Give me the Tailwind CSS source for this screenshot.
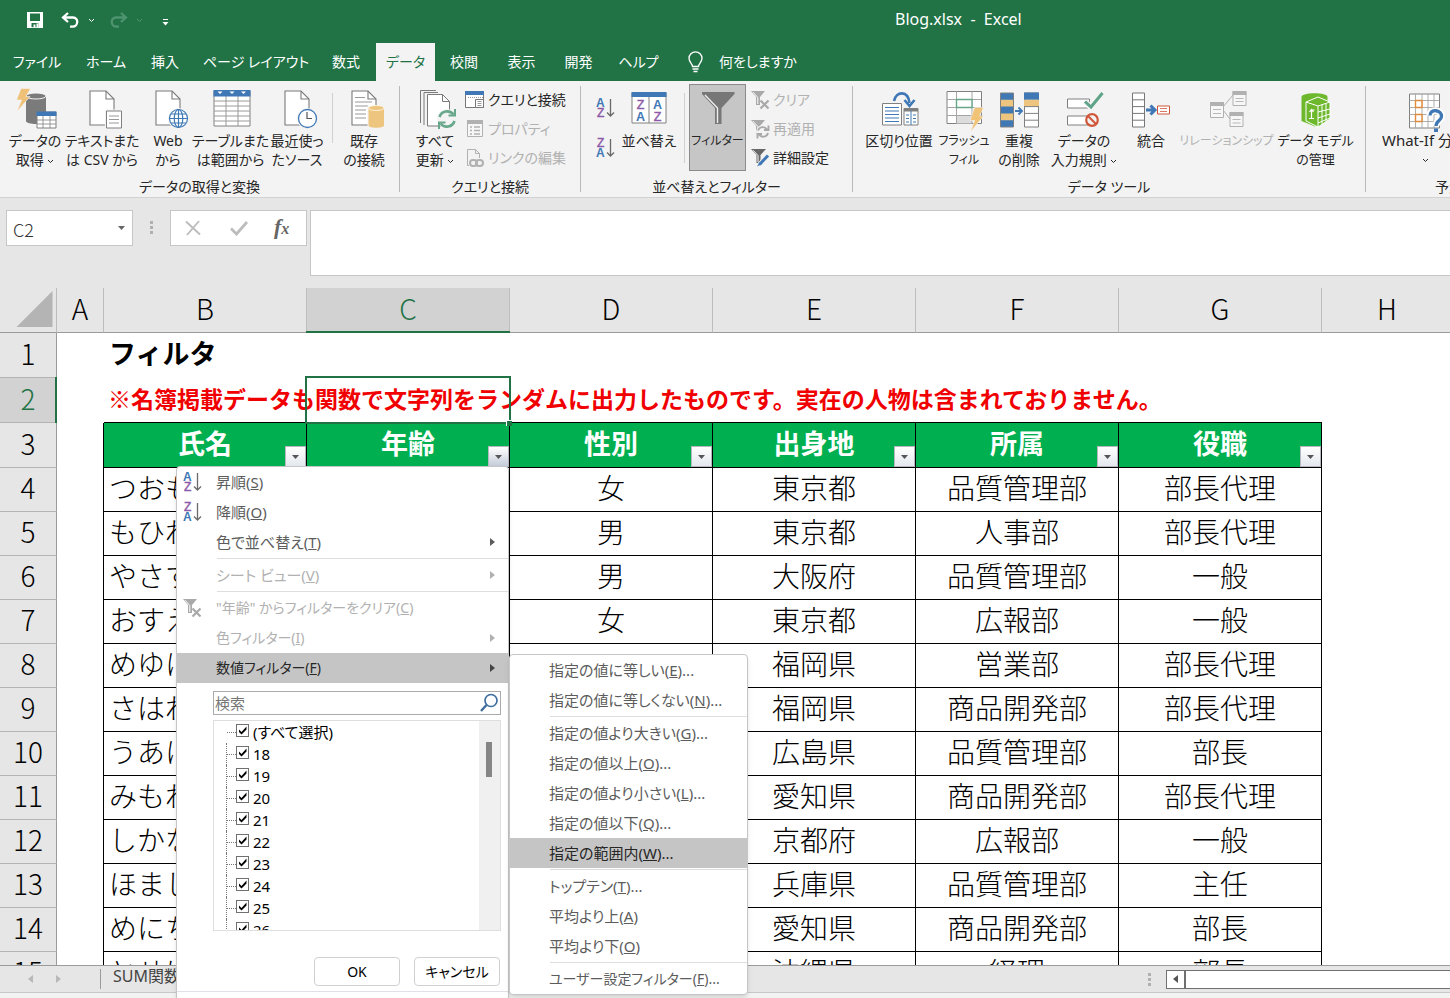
<!DOCTYPE html>
<html lang="ja">
<head>
<meta charset="utf-8">
<title>Blog.xlsx - Excel</title>
<script src="https://cdn.jsdelivr.net/npm/@tailwindcss/browser@4"></script>
</head>
<body class="relative flex h-screen flex-col overflow-hidden bg-[#e6e6e6] font-['Noto_Sans','Noto_Sans_CJK_JP',sans-serif] text-[15px] leading-[19px] text-[#262626]">

<svg class="hidden">
  <symbol id="chev" viewBox="0 0 7 5"><path d="M1 1l2.5 2.5L6 1" fill="none" stroke="currentColor"/></symbol>
  <symbol id="page" viewBox="0 0 40 40"><path d="M8 3h16l8 8v26H8z" fill="#fff" stroke="#7a7a7a" stroke-width="1.1"/><path d="M24 3v8h8" fill="none" stroke="#7a7a7a" stroke-width="1.1"/></symbol>
  <symbol id="down" viewBox="0 0 7 4"><path d="M0 0h7L3.5 4z" fill="currentColor"/></symbol>
  <symbol id="tick" viewBox="0 0 13 13"><path d="M3 5.5l2.500 2.500L10.500 2.500v3L5.500 10.500 3 8z" fill="#000"/></symbol>
  <symbol id="az" viewBox="0 0 20 22"><g font-family="Liberation Sans" font-weight="bold" font-size="12"><text x="0" y="9.500" fill="#3f78b5">A</text><text x="1" y="20" fill="#8d5aa8" font-weight="normal" stroke="#8d5aa8" stroke-width=".4">Z</text></g><path d="M14.500 2v17M11 15.500l3.500 3.500 3.500-3.500" fill="none" stroke="#6a6a6a" stroke-width="1.300"/></symbol>
  <symbol id="za" viewBox="0 0 20 22"><g font-family="Liberation Sans" font-weight="bold" font-size="12"><text x="0" y="20" fill="#3f78b5">A</text><text x="1" y="9.500" fill="#8d5aa8" font-weight="normal" stroke="#8d5aa8" stroke-width=".4">Z</text></g><path d="M14.500 2v17M11 15.500l3.500 3.500 3.500-3.500" fill="none" stroke="#6a6a6a" stroke-width="1.300"/></symbol>
  <symbol id="clr" viewBox="0 0 20 20"><path d="M1 1h14l-5 6v8H6V7z" fill="#a9a9a9"/><path d="M3 2.200l4.800 5.300V14" fill="none" stroke="#fff"/><path d="M10.500 10.500l8 8M18.500 10.500l-8 8" stroke="#a9a9a9" stroke-width="2.200"/></symbol>
  <symbol id="right" viewBox="0 0 5 8"><path d="M0 0v8l5-4z" fill="currentColor"/></symbol>
</svg>

<!-- Title bar -->
<header class="shrink-0 bg-[#217346] text-white">
  <div class="relative flex h-[43px] items-center pb-[3px] pl-[27px]">
    <button aria-label="上書き保存" class="w-4"><svg class="size-4" viewBox="0 0 16 16"><path d="M.8.800h14.400v14.400H.8z" fill="none" stroke="#fff" stroke-width="1.600"/><path d="M1 1h2v8h10V1h2v14H1z" fill="#fff"/><path d="M4.500 11h7v4.200h-7z" fill="#217346"/><path d="M6.500 12.500h2v3H6.500zM9.500 11.500h2v4h-2z" fill="#fff"/></svg></button>
    <button aria-label="元に戻す" class="ml-[18px] w-[19px]"><svg class="h-4 w-[19px]" viewBox="0 0 19 16"><path d="M7 1L2 5.500 7 10M2.500 5.500H12c6 0 5.500 9-.5 9.200H9" fill="none" stroke="#fff" stroke-width="2.300"/></svg></button>
    <svg class="ml-2 h-[5px] w-[7px]"><use href="#chev"/></svg>
    <button aria-label="やり直し" class="ml-[14px] w-[19px] text-[#4f9470]"><svg class="h-4 w-[19px]" viewBox="0 0 19 16"><path d="M12 1l5 4.500-5 4.500M16.500 5.500H7C1 5.500 1.500 14.500 7.500 14.700H10" fill="none" stroke="currentColor" stroke-width="2.300"/></svg></button>
    <svg class="ml-2 h-[5px] w-[7px] text-[#4f9470]"><use href="#chev"/></svg>
    <svg class="ml-[19px] mt-1 h-[7px] w-[7px]" viewBox="0 0 7 7"><path d="M1 .5h5" stroke="#fff"/><path d="M.5 3h6l-3 3.500z" fill="#fff"/></svg>
    <h1 class="absolute left-[895px] top-[9px] whitespace-pre text-base leading-5">Blog.xlsx  -  Excel</h1>
  </div>
  <nav class="flex h-[38px] items-center whitespace-nowrap text-center text-sm [font-feature-settings:'palt']">
    <a href="#" class="w-[74px]">ファイル</a>
    <a href="#" class="w-16">ホーム</a>
    <a href="#" class="w-[54px]">挿入</a>
    <a href="#" class="w-32">ページ レイアウト</a>
    <a href="#" class="w-14 pr-1">数式</a>
    <a href="#" class="flex h-full w-[59px] items-center justify-center bg-[#f3f3f3] text-[#217346]">データ</a>
    <a href="#" class="w-[58px]">校閲</a>
    <a href="#" class="w-[57px]">表示</a>
    <a href="#" class="w-[57px]">開発</a>
    <a href="#" class="w-[63px]">ヘルプ</a>
    <a href="#" class="flex items-center gap-4 pl-[18px]">
      <svg class="h-[22px] w-[15px]" viewBox="0 0 15 22"><path d="M4.500 15.500c0-3-3.500-4-3.500-8.200a6.500 6.500 0 0 1 13 0c0 4.200-3.500 5.200-3.500 8.200zM4.500 18h6M5.500 20.500h4" fill="none" stroke="#fff" stroke-width="1.300"/></svg>何をしますか</a>
  </nav>
</header>

<!-- Ribbon -->
<div class="flex h-[117px] shrink-0 overflow-hidden whitespace-nowrap border-b border-[#d2d2d2] bg-[#f3f3f3] text-center [font-feature-settings:'palt'] [&_button]:shrink-0 [&_svg]:overflow-visible">
  <section class="flex w-[399px] shrink-0 flex-col">
    <div class="flex h-24 pl-[6px] text-sm leading-[19px]">
      <button class="flex w-[58px] flex-col items-center pt-[7px]">
        <svg class="mb-[3px] size-10" viewBox="0 0 40 40"><path d="M11 8v25c0 4 20 4 20 0V8z" fill="#7b7b7b"/><ellipse cx="21" cy="8" rx="10" ry="3" fill="#7b7b7b" stroke="#f3f3f3"/><path d="M6 .5h9.500L11 8.500h4L2 23.500 6.500 12H1.500z" fill="#efc078" stroke="#f3f3f3" stroke-width=".6"/><path d="M22 24h19v16H22z" fill="#fff" stroke="#808080"/><path d="M21.500 23.500h20v4.500h-20z" fill="#3f78b5"/><path d="M22 32h19M22 36h19M28 28v12M35 28v12" stroke="#808080" stroke-width=".8"/></svg>
        <span>データの<br>取得 <svg class="inline h-[5px] w-[7px]"><use href="#chev"/></svg></span></button>
      <button class="flex w-[76px] flex-col items-center pt-[7px]">
        <svg class="mb-[3px] size-10" viewBox="0 0 40 40"><use href="#page"/><path d="M23 21.500h18v19H23z" fill="#f3f3f3"/><path d="M24.500 23h15v17h-15z" fill="#fff" stroke="#808080"/><path d="M27 28h10M27 31.500h10M27 35h10" stroke="#999"/></svg>
        <span>テキストまた<br>は CSV から</span></button>
      <button class="flex w-14 flex-col items-center pt-[7px]">
        <svg class="mb-[3px] size-10" viewBox="0 0 40 40"><use href="#page"/><circle cx="30.500" cy="30.500" r="10.500" fill="#f3f3f3"/><g fill="none" stroke="#3f78b5" stroke-width="1.200"><circle cx="30.500" cy="30.500" r="9" fill="#fff"/><ellipse cx="30.500" cy="30.500" rx="4.300" ry="9"/><path d="M30.500 21.500v18M21.500 30.500h18M23 26h15M23 35h15"/></g></svg>
        <span>Web<br>から</span></button>
      <button class="flex w-[69px] flex-col items-center pt-[7px]">
        <svg class="mb-[3px] size-10" viewBox="0 0 40 40"><path d="M3 3h36v35H3z" fill="#fff" stroke="#808080"/><path d="M3 13h36M3 18h36M3 23h36M3 28h36M3 33h36M15 8v30M27 8v30" stroke="#9a9a9a"/><path d="M2.500 2h37v6.500h-37z" fill="#3f78b5"/><path d="M6.500 3.500h5L9 6zM18.500 3.500h5L21 6zM30 3.500h5L32.500 6z" fill="#fff"/></svg>
        <span>テーブルまた<br>は範囲から</span></button>
      <button class="flex w-16 flex-col items-center pt-[7px]">
        <svg class="mb-[3px] size-10" viewBox="0 0 40 40"><use href="#page"/><circle cx="30.500" cy="30.500" r="10.500" fill="#f3f3f3"/><circle cx="30.500" cy="30.500" r="9" fill="#fff" stroke="#3f78b5" stroke-width="1.300"/><path d="M30 24v6.500h5" fill="none" stroke="#555" stroke-width="1.200"/></svg>
        <span>最近使っ<br>たソース</span></button>
      <div class="ml-[3px] mt-3 h-[50px] w-px bg-[#d0d0d0]"></div>
      <button class="ml-[3px] flex w-14 flex-col items-center pt-[7px]">
        <svg class="mb-[3px] size-10" viewBox="0 0 40 40"><use href="#page"/><path d="M11 9.500h10M11 14h17M11 18h13M11 22h11M11 26h11M11 30h11" stroke="#999"/><path d="M23.500 18h17.500v22H23.500z" fill="#f3f3f3"/><path d="M24.500 20v17.500c0 3 15.500 3 15.500 0V20z" fill="#edc57e"/><ellipse cx="32.200" cy="20" rx="7.700" ry="2.500" fill="#edc57e" stroke="#fff3dc"/></svg>
        <span>既存<br>の接続</span></button>
    </div>
    <div class="text-sm leading-[19px]">データの取得と変換</div>
  </section>
  <div class="my-[5px] w-px shrink-0 bg-[#b9b9b9]"></div>

  <section class="flex w-[180px] shrink-0 flex-col">
    <div class="flex h-24 pl-[9px] text-sm leading-[19px]">
      <button class="flex w-[52px] flex-col items-center pt-[7px]">
        <svg class="mb-[3px] size-10" viewBox="0 0 40 40"><path d="M5.500 35V2.500H21M9 37V4.500h14" fill="none" stroke="#7a7a7a"/><path d="M12.500 6.500h15l7 7V38h-22z" fill="#fff" stroke="#7a7a7a"/><path d="M27.500 6.500v7h7" fill="none" stroke="#7a7a7a"/><circle cx="32" cy="31" r="10" fill="#f3f3f3"/><g fill="none" stroke="#67a88b" stroke-width="2.600"><path d="M24.500 29a8 8 0 0 1 14-2.500M39.500 33a8 8 0 0 1-14 2.500"/><path d="M40 21v6.500h-6.500M24 41v-6.500h6.500" stroke-width="2"/></g></svg>
        <span>すべて<br>更新 <svg class="inline h-[5px] w-[7px]"><use href="#chev"/></svg></span></button>
      <div class="ml-1 mt-1 flex flex-col text-left">
        <button class="flex h-[29px] items-center gap-[3px]"><svg class="size-5" viewBox="0 0 20 20"><path d="M.5 1.500h18v16H.5z" fill="#fff" stroke="#777"/><path d="M0 1h19v4H0z" fill="#3f78b5"/><path d="M3 7.500h15" stroke="#999" stroke-dasharray="1 1"/><path d="M10.500 9.500h8v8h-8z" fill="#fff" stroke="#777"/><path d="M12.500 11.500h4M12.500 13.500h4M12.500 15.500h4" stroke="#999"/></svg>クエリと接続</button>
        <button disabled class="flex h-[29px] items-center gap-[3px] text-[#b1b1b1]"><svg class="size-5" viewBox="0 0 20 20"><path d="M2.500 1.500h15v16h-15z" fill="#f7f7f7" stroke="#b1b1b1"/><path d="M2 1h16v4H2z" fill="#b1b1b1"/><path d="M5 8h2M5 11.500h2M5 15h2M9 8h6M9 11.500h6M9 15h6" stroke="#b1b1b1" stroke-width="1.300"/></svg>プロパティ</button>
        <button disabled class="flex h-[29px] items-center gap-[3px] text-[#b1b1b1]"><svg class="size-5" viewBox="0 0 20 20"><path d="M4 17.500H2.500V1.500h8l4 4V10M10.500 1.500v4h4" fill="none" stroke="#b1b1b1"/><g fill="none" stroke="#b1b1b1" stroke-width="2"><rect x="5" y="12" width="7" height="6" rx="3"/><rect x="11" y="12" width="7" height="6" rx="3"/></g></svg>リンクの編集</button>
      </div>
    </div>
    <div class="text-sm leading-[19px]">クエリと接続</div>
  </section>
  <div class="my-[5px] w-px shrink-0 bg-[#b9b9b9]"></div>

  <section class="flex w-[271px] shrink-0 flex-col">
    <div class="flex h-24 pl-[15px] text-sm leading-[19px]">
      <div class="flex flex-col gap-[18px] pt-4">
        <button aria-label="昇順" class="w-5"><svg class="h-[22px] w-5"><use href="#az"/></svg></button>
        <button aria-label="降順" class="w-5"><svg class="h-[22px] w-5"><use href="#za"/></svg></button>
      </div>
      <button class="ml-1 flex w-[58px] flex-col items-center pt-[7px]">
        <svg class="mb-[3px] size-10" viewBox="0 0 40 40"><path d="M3 5h34v30H3z" fill="#fff" stroke="#808080"/><path d="M2.500 4h35v5h-35z" fill="#3f78b5"/><path d="M20 9v26" stroke="#808080"/><g font-family="Liberation Sans" font-size="12.500" font-weight="bold" text-anchor="middle"><text x="11.500" y="20.500" fill="#8d5aa8" font-weight="normal" stroke="#8d5aa8" stroke-width=".4">Z</text><text x="11.500" y="32.500" fill="#3f78b5">A</text><text x="28.500" y="20.500" fill="#3f78b5">A</text><text x="28.500" y="32.500" fill="#8d5aa8" font-weight="normal" stroke="#8d5aa8" stroke-width=".4">Z</text></g></svg>
        <span>並べ替え</span></button>
      <div class="ml-[6px] mt-3 h-[70px] w-px bg-[#d0d0d0]"></div>
      <button class="mb-[6px] ml-1 mt-[3px] flex w-[57px] flex-col items-center border border-[#8b8b8b] bg-[#c6c6c6] pt-[3px] text-xs leading-[19px]">
        <svg class="mb-[3px] size-10" viewBox="0 0 40 40"><path d="M4 4h32.500v2L23.500 20v16h-6.500V20L4 6z" fill="#777"/><path d="M7 7l12.500 13v15" fill="none" stroke="#eee" stroke-width="1.400"/></svg>
        <span>フィルター</span></button>
      <div class="ml-1 mt-1 flex flex-col text-left">
        <button disabled class="flex h-[29px] items-center gap-[3px] text-[#b1b1b1]"><svg class="size-5"><use href="#clr"/></svg>クリア</button>
        <button disabled class="flex h-[29px] items-center gap-[3px] text-[#b1b1b1]"><svg class="size-5" viewBox="0 0 20 20"><path d="M1 1h14l-5 6v8H6V7z" fill="#a9a9a9"/><path d="M3 2.200l4.800 5.300V14" fill="none" stroke="#fff"/><circle cx="13" cy="13" r="7" fill="#f3f3f3"/><path d="M8 11.500a5 5 0 0 1 9-1M18 14a5 5 0 0 1-9 1.500M18.500 6.500v4.500h-4.500M7.500 19.500V15H12" fill="none" stroke="#a9a9a9" stroke-width="1.900"/></svg>再適用</button>
        <button class="flex h-[29px] items-center gap-[3px]"><svg class="size-5" viewBox="0 0 20 20"><path d="M1 1h15l-5.500 6v8h-4V7z" fill="#666"/><path d="M3 2.200l5 5.300V14" fill="none" stroke="#fff"/><path d="M18.500 6.500L9 17.500" stroke="#f3f3f3" stroke-width="5"/><path d="M18 7.500L9.500 16.500" stroke="#3f78b5" stroke-width="3"/><path d="M9.500 14.500l2 2-4.500 2z" fill="#3f78b5"/></svg>詳細設定</button>
      </div>
    </div>
    <div class="text-sm leading-[19px]">並べ替えとフィルター</div>
  </section>
  <div class="my-[5px] w-px shrink-0 bg-[#b9b9b9]"></div>

  <section class="flex w-[512px] shrink-0 flex-col">
    <div class="flex h-24 pl-[10px] text-sm leading-[19px]">
      <button class="flex w-[72px] flex-col items-center pt-[7px]">
        <svg class="mb-[3px] size-10" viewBox="0 0 40 40"><path d="M3.500 15.500h19V37h-19z" fill="#fff" stroke="#808080"/><path d="M6 19.500h14M6 23h14M6 26.500h14M6 30h14M6 33.500h14" stroke="#3f78b5" stroke-width="1.200"/><path d="M25 20.500h14V37H25z" fill="#fff" stroke="#808080"/><path d="M25 20.500h14v3H25z" fill="#808080"/><path d="M32 23v14M27 27h3M34 27h3M27 30.500h3M34 30.500h3M27 34h3M34 34h3" stroke="#3f78b5"/><path d="M15 13C17 3 29 2 30.500 15" fill="none" stroke="#3f78b5" stroke-width="2.600"/><path d="M25.500 12l5 6 5-6" fill="none" stroke="#3f78b5" stroke-width="2.600"/></svg>
        <span>区切り位置</span></button>
      <button class="flex w-[58px] flex-col items-center pt-[7px] text-xs leading-[19px]">
        <svg class="mb-[3px] size-10" viewBox="0 0 40 40"><path d="M3 3.500h34.500v32H3z" fill="#fff" stroke="#808080"/><path d="M12.500 27.500H28v8H12.500z" fill="#dcdcdc"/><path d="M3 11.500h34M3 19.500h34M3 27.500h34M12.500 3.500v32M28 3.500v32" stroke="#a5a5a5"/><path d="M12.500 11.500H28v8H12.500z" fill="#fff" stroke="#67a88b" stroke-width="1.400"/><path d="M30.500 19.500h9L35.500 28h4L26.500 44l4-11.500h-4.500z" fill="#f0c376" stroke="#f3f3f3" stroke-width=".6"/></svg>
        <span>フラッシュ<br>フィル</span></button>
      <button class="flex w-[52px] flex-col items-center pt-[7px]">
        <svg class="mb-[3px] size-10" viewBox="0 0 40 40"><path d="M1 5h14v34H1z" fill="#3f78b5"/><path d="M1 11.800h14v6.800H1zM1 25.400h14v6.800H1z" fill="#edc57e"/><path d="M25.500 5h14v34h-14z" fill="#fff" stroke="#808080"/><path d="M25 4.500h15v7.300H25z" fill="#3f78b5"/><path d="M25 11.800h15v6.800H25z" fill="#edc57e"/><path d="M25 18.600h15M25 25.400h15M25 32.200h15M1.500 5v34h13V5z" fill="none" stroke="#808080"/><path d="M16 23h7M19.500 19.500L23 23l-3.500 3.500" fill="none" stroke="#3f78b5" stroke-width="1.800"/></svg>
        <span>重複<br>の削除</span></button>
      <button class="flex w-[78px] flex-col items-center pt-[7px]">
        <svg class="mb-[3px] size-10" viewBox="0 0 40 40"><path d="M3.500 11h22v9h-22zM3.500 28h22v9h-22z" fill="#fff" stroke="#808080"/><path d="M21 13.500l6 6L38.500 5" fill="none" stroke="#f3f3f3" stroke-width="6"/><path d="M21 13.500l6 5.500L38.500 5" fill="none" stroke="#5fa388" stroke-width="3"/><circle cx="28" cy="32" r="5.800" fill="#f3f3f3" stroke="#d0583a" stroke-width="2.200"/><path d="M24 28l8 8" stroke="#d0583a" stroke-width="2.200"/></svg>
        <span>データの<br>入力規則 <svg class="inline h-[5px] w-[7px]"><use href="#chev"/></svg></span></button>
      <button class="flex w-14 flex-col items-center pt-[7px]">
        <svg class="mb-[3px] size-10" viewBox="0 0 40 40"><path d="M1.500 5h12v34h-12zM1.500 11.800h12M1.500 18.600h12M1.500 25.400h12M1.500 32.200h12" fill="#fff" stroke="#777"/><path d="M15 22h8M19.500 17.500L24 22l-4.500 4.500" fill="none" stroke="#3f78b5" stroke-width="3"/><path d="M26.500 18h12v8h-12z" fill="#fff" stroke="#d0583a"/><path d="M29 20.500h7M29 23.500h7" stroke="#d0583a" stroke-width=".8"/></svg>
        <span>統合</span></button>
      <button disabled class="flex w-[95px] flex-col items-center pt-[7px] text-xs leading-[19px] text-[#b1b1b1]">
        <svg class="mb-[3px] size-10" viewBox="0 0 40 40"><path d="M16 19L26 7M16 22l7 9" stroke="#b1b1b1"/><g fill="#f7f7f7" stroke="#b1b1b1"><path d="M3.500 14.500h13v15h-13zM26 3.500h13v14H26zM23 24.500h13v14H23z"/><path d="M6 21.500h8M6 25.500h8M28.500 10.500h8M28.500 13.500h8M25.500 31.500h8M25.500 35h8" stroke-width=".9"/></g><path d="M3 14h14v4H3zM25.500 3h14v4h-14zM22.500 24h14v4h-14z" fill="#b1b1b1"/></svg>
        <span>リレーションシップ</span></button>
      <button class="flex w-[83px] flex-col items-center pt-[7px] text-[13px] leading-[19px]">
        <svg class="mb-[3px] size-10" viewBox="0 0 40 40"><path d="M5.500 9c0-5 26-5 26 0v22L19 38.500 5.500 33z" fill="#6db82d"/><path d="M10 14l12-5 12 5v17l-12 8-12-6z" fill="#6db82d" stroke="#fff"/><path d="M10 14l12 4 12-4M22 18v21" fill="none" stroke="#fff"/><path d="M26 17v19M30 15.500v18M22 24l12-3M22 30l12-4M22 35l12-5" stroke="#fff"/><path d="M18.500 22h-3v8M13.500 24l2-2.500 2 2.500M13 30.500h5" fill="none" stroke="#fff" stroke-width="1.200"/></svg>
        <span>データ モデル<br>の管理</span></button>
    </div>
    <div class="text-sm leading-[19px]">データ ツール</div>
  </section>
  <div class="my-[5px] w-px shrink-0 bg-[#b9b9b9]"></div>

  <section class="flex w-[166px] shrink-0 flex-col">
    <div class="flex h-24 pl-[8px] leading-[19px]">
      <button class="flex w-[102px] flex-col items-center pt-[7px]">
        <svg class="mb-[3px] size-10" viewBox="0 0 40 40"><path d="M4.500 6h30v34h-30z" fill="#fff" stroke="#808080"/><path d="M4.500 12.500h30M4.500 19.500h30M4.500 26.500h30M4.500 33.500h30M10.500 6v34M17 6v34M23 6v34M29 6v34" stroke="#a5a5a5" stroke-width=".9"/><path d="M10.500 12.500H17v7h-6.500zM10.500 26.500H17v7h-6.500z" fill="#fff" stroke="#e08a3a" stroke-width="1.400"/><path d="M25 27.500c0-7 12-6 11.500 1 0 4-5.500 4-5.500 9.500" fill="none" stroke="#fff" stroke-width="7"/><path d="M25 27.500c0-7 12-6 11.500 1 0 4-5.500 4-5.500 9.500" fill="none" stroke="#3f78b5" stroke-width="3.300"/><path d="M29 40.500h4v3.500h-4z" fill="#3f78b5"/></svg>
        <span>What-If 分析<br><svg class="inline h-[5px] w-[7px]"><use href="#chev"/></svg></span></button>
    </div>
    <div class="text-sm leading-[19px]">予測</div>
  </section>
</div>

<!-- Formula bar -->
<div class="flex h-[90px] shrink-0 items-start pl-[6px] pt-3">
  <div class="relative flex h-9 w-[127px] items-center border border-[#c6c6c6] bg-white">
    <input aria-label="名前ボックス" value="C2" class="h-full w-full bg-transparent pl-[6px] pt-px font-['Noto_Sans_CJK_JP'] text-lg font-light text-[#333] outline-none">
    <svg class="mr-[7px] h-1 w-[7px] shrink-0 text-[#666]"><use href="#down"/></svg>
  </div>
  <div class="ml-[17px] mt-[11px] flex flex-col gap-[2px]"><i class="size-[3px] bg-[#b0b0b0]"></i><i class="size-[3px] bg-[#b0b0b0]"></i><i class="size-[3px] bg-[#b0b0b0]"></i></div>
  <div class="ml-[17px] flex h-9 w-[137px] items-center border border-[#c6c6c6] bg-white pl-[14px]">
    <button aria-label="キャンセル"><svg class="size-4" viewBox="0 0 16 16"><path d="M1 1.500l14 13M14 1L2 15" stroke="#bcbcbc" stroke-width="1.900"/></svg></button>
    <button aria-label="入力" class="ml-[29px]"><svg class="h-4 w-[18px]" viewBox="0 0 18 16"><path d="M1 8.500l5.500 5.500L17 2" fill="none" stroke="#bcbcbc" stroke-width="2.800"/></svg></button>
    <button aria-label="関数の挿入" class="ml-[26px] font-['Liberation_Serif'] text-[22px] font-bold italic leading-6 text-[#666]">f<span class="text-base">x</span></button>
  </div>
  <textarea aria-label="数式バー" class="ml-[3px] h-[66px] flex-1 resize-none border border-r-0 border-[#c6c6c6] bg-white outline-none"></textarea>
</div>

<!-- Worksheet -->
<main class="relative min-h-0 flex-1 overflow-hidden bg-white font-['Noto_Sans_CJK_JP',sans-serif]">
  <table class="w-[1453px] table-fixed border-separate border-spacing-0 text-center text-[28px] font-light leading-9 text-black [&_tbody_th]:border-b [&_tbody_th]:border-r [&_tbody_th]:border-[#b4b4b4] [&_tbody_th]:border-r-[#9b9b9b] [&_tbody_th]:bg-[#e6e6e6] [&_tbody_th]:font-light [&_td]:p-0 [&_td]:pb-[5px] [&_th]:p-0 [&_th]:pb-[5px]">
    <colgroup><col class="w-[57px]"><col class="w-[47px]"><col class="w-[203px]"><col class="w-[203px]"><col class="w-[203px]"><col class="w-[203px]"><col class="w-[203px]"><col class="w-[203px]"><col></colgroup>
    <thead>
      <tr class="h-[45px] bg-[#e6e6e6] [&_th]:border-b [&_th]:border-r [&_th]:border-[#9b9b9b] [&_th]:border-r-[#bdbdbd] [&_th]:font-light">
        <th aria-label="すべて選択"><svg class="ml-4 mt-[3px] h-9 w-[37px]" viewBox="0 0 37 37"><path d="M37 0v37H0z" fill="#b4b4b4"/></svg></th>
        <th>A</th><th>B</th><th class="bg-[#d2d2d2] text-[#217346]">C</th><th>D</th><th>E</th><th>F</th><th>G</th><th>H</th>
      </tr>
    </thead>
    <tbody>
      <tr class="h-[45px]"><th>1</th><td></td><td class="text-left text-[27px] font-bold"><div class="w-0 whitespace-nowrap pl-[5px]">フィルタ</div></td><td></td><td></td><td></td><td></td><td></td><td></td></tr>
      <tr class="h-[45px] [&_td]:border-black"><th class="bg-[#d2d2d2]! text-[#217346]">2</th><td></td><td class="border-b text-left text-[23px] font-bold text-[#f00000]"><div class="w-0 whitespace-nowrap pl-1">※名簿掲載データも関数で文字列をランダムに出力したものです。実在の人物は含まれておりません。</div></td><td class="border-b"></td><td class="border-b"></td><td class="border-b"></td><td class="border-b"></td><td class="border-b"></td><td></td></tr>
      <tr class="h-[45px] text-[27px] font-bold text-white [&_button]:absolute [&_button]:bottom-0 [&_button]:right-0 [&_button]:flex [&_button]:size-[21px] [&_button]:items-center [&_button]:justify-center [&_button]:border [&_button]:border-[#b5b9bf] [&_button]:bg-linear-to-b [&_button]:from-white [&_button]:to-[#e4e8ee] [&_button]:text-[#555] [&_svg]:h-1 [&_svg]:w-[7px] [&_td]:relative [&_td]:border-b [&_td]:border-r [&_td]:border-black [&_td]:bg-[#00b050]">
        <th class="text-[28px] text-black">3</th><td class="border-b-0! bg-white!"></td>
        <td>氏名<button aria-label="氏名フィルター"><svg><use href="#down"/></svg></button></td>
        <td>年齢<button aria-label="年齢フィルター" class="to-[#c4ccd8]!"><svg><use href="#down"/></svg></button></td>
        <td>性別<button aria-label="性別フィルター"><svg><use href="#down"/></svg></button></td>
        <td>出身地<button aria-label="出身地フィルター"><svg><use href="#down"/></svg></button></td>
        <td>所属<button aria-label="所属フィルター"><svg><use href="#down"/></svg></button></td>
        <td>役職<button aria-label="役職フィルター"><svg><use href="#down"/></svg></button></td>
        <td class="border-0! bg-white!"></td></tr>
    </tbody>
    <tbody class="[&_td]:border-b [&_td]:border-r [&_td]:border-black [&_td:nth-child(2)]:border-b-0 [&_td:nth-child(3)]:pl-[5px] [&_td:nth-child(3)]:text-left [&_td:nth-child(9)]:border-0 [&_tr]:h-11">
      <tr><th>4</th><td></td><td>つおも</td><td></td><td>女</td><td>東京都</td><td>品質管理部</td><td>部長代理</td><td></td></tr>
      <tr><th>5</th><td></td><td>もひれ</td><td></td><td>男</td><td>東京都</td><td>人事部</td><td>部長代理</td><td></td></tr>
      <tr><th>6</th><td></td><td>やさす</td><td></td><td>男</td><td>大阪府</td><td>品質管理部</td><td>一般</td><td></td></tr>
      <tr><th>7</th><td></td><td>おすえ</td><td></td><td>女</td><td>東京都</td><td>広報部</td><td>一般</td><td></td></tr>
      <tr><th>8</th><td></td><td>めゆに</td><td></td><td></td><td>福岡県</td><td>営業部</td><td>部長代理</td><td></td></tr>
      <tr><th>9</th><td></td><td>さはれ</td><td></td><td></td><td>福岡県</td><td>商品開発部</td><td>部長代理</td><td></td></tr>
      <tr><th>10</th><td></td><td>うあに</td><td></td><td></td><td>広島県</td><td>品質管理部</td><td>部長</td><td></td></tr>
      <tr><th>11</th><td></td><td>みもれ</td><td></td><td></td><td>愛知県</td><td>商品開発部</td><td>部長代理</td><td></td></tr>
      <tr><th>12</th><td></td><td>しかな</td><td></td><td></td><td>京都府</td><td>広報部</td><td>一般</td><td></td></tr>
      <tr><th>13</th><td></td><td>ほまし</td><td></td><td></td><td>兵庫県</td><td>品質管理部</td><td>主任</td><td></td></tr>
      <tr><th>14</th><td></td><td>めにち</td><td></td><td></td><td>愛知県</td><td>商品開発部</td><td>部長</td><td></td></tr>
      <tr><th>15</th><td></td><td>とせけ</td><td></td><td></td><td>沖縄県</td><td>経理</td><td>部長</td><td></td></tr>
    </tbody>
  </table>
  <!-- Selection: header underline, row marker, cell outline and fill handle -->
  <div class="absolute left-[306px] top-[43px] h-[2px] w-[204px] bg-[#217346]"></div>
  <div class="absolute left-[55px] top-[89px] h-[46px] w-[2px] bg-[#217346]"></div>
  <div class="absolute left-[305px] top-[88px] h-[48px] w-[206px] border-2 border-[#217346]"></div>
  <div class="absolute left-[506px] top-[132px] size-[6px] border-l border-t border-white bg-[#217346]"></div>
</main>

<!-- Sheet tabs and scroll bar -->
<footer class="shrink-0 text-[#444]">
  <div class="flex h-7 items-center border-y border-t-[#9b9b9b] border-b-[#c8c8c8] bg-[#e6e6e6]">
    <button aria-label="前のシート" class="ml-7"><svg class="h-2 w-[5px] rotate-180 text-[#b8b8b8]"><use href="#right"/></svg></button>
    <button aria-label="次のシート" class="ml-[23px]"><svg class="h-2 w-[5px] text-[#b8b8b8]"><use href="#right"/></svg></button>
    <div class="ml-[39px] h-5 w-px bg-[#9b9b9b]"></div>
    <a href="#" class="mb-[6px] ml-3 text-base">SUM関数</a>
    <div class="ml-auto flex flex-col gap-[2px]"><i class="size-[3px] bg-[#b0b0b0]"></i><i class="size-[3px] bg-[#b0b0b0]"></i><i class="size-[3px] bg-[#b0b0b0]"></i></div>
    <div class="ml-[15px] flex h-[19px] w-[284px] items-center border border-r-0 border-[#707070] bg-white"><button aria-label="左へスクロール" class="flex h-full w-[19px] items-center justify-center border-r-2 border-[#707070]"><svg class="h-2 w-[5px] rotate-180 text-[#555]"><use href="#right"/></svg></button></div>
  </div>
  <div class="h-[5px] bg-[#f3f3f3]"></div>
</footer>

<!-- Filter menu -->
<div role="menu" class="absolute left-[176px] top-[466px] h-[540px] w-[333px] rounded-t border border-[#c6c6c6] bg-white text-[#5c5c5c] shadow-md [font-feature-settings:'palt'] [&>button]:flex [&>button]:h-[30px] [&>button]:w-full [&>button]:items-center [&_hr]:my-px [&_hr]:ml-10 [&_hr]:border-[#dedede]">
  <button role="menuitem"><svg class="ml-[6px] mr-[13px] h-[22px] w-5"><use href="#az"/></svg><span>昇順(<u>S</u>)</span></button>
  <button role="menuitem"><svg class="ml-[6px] mr-[13px] h-[22px] w-5"><use href="#za"/></svg><span>降順(<u>O</u>)</span></button>
  <button role="menuitem" class="justify-between pl-[39px] pr-[13px]"><span>色で並べ替え(<u>T</u>)</span><svg class="h-2 w-[5px]"><use href="#right"/></svg></button>
  <hr>
  <button role="menuitem" disabled class="justify-between pl-[39px] pr-[13px] text-[#b1b1b1]"><span>シート ビュー(<u>V</u>)</span><svg class="h-2 w-[5px]"><use href="#right"/></svg></button>
  <hr>
  <button role="menuitem" disabled class="text-sm text-[#b1b1b1]"><svg class="ml-[5px] mr-[14px] size-5"><use href="#clr"/></svg><span>"年齢" からフィルターをクリア(<u>C</u>)</span></button>
  <button role="menuitem" disabled class="justify-between pl-[39px] pr-[13px] text-sm text-[#b1b1b1]"><span>色フィルター(<u>I</u>)</span><svg class="h-2 w-[5px]"><use href="#right"/></svg></button>
  <button role="menuitem" class="justify-between bg-[#c5c5c5] pl-[39px] pr-[13px] text-sm text-[#262626]"><span>数値フィルター(<u>F</u>)</span><svg class="h-2 w-[5px] text-[#444]"><use href="#right"/></svg></button>
  <div class="ml-9 mt-2 flex h-6 w-[288px] items-center border border-[#ababab]">
    <input aria-label="検索" placeholder="検索" class="min-w-0 flex-1 pl-px text-[15px] outline-none placeholder:text-[#767676]">
    <svg class="mr-[1px] size-5" viewBox="0 0 20 20"><circle cx="12" cy="7.500" r="6" fill="none" stroke="#3f6f9f" stroke-width="1.700"/><path d="M7.500 12L2 18" stroke="#3f6f9f" stroke-width="2.400"/></svg>
  </div>
  <div class="ml-9 mt-[5px] flex h-[211px] w-[288px] overflow-hidden border border-[#dedede] text-black">
    <div class="flex-1 pl-3 [&_input]:size-[13px] [&_input]:appearance-none [&_input]:border [&_input]:border-[#707070] [&_input]:[grid-area:1/1] [&_label]:flex [&_label]:h-[22px] [&_label]:items-center [&_label]:border-l [&_label]:border-dotted [&_label]:border-[#777] [&_label_i]:w-[9px] [&_label_i]:border-t [&_label_i]:border-dotted [&_label_i]:border-[#777] [&_label>span]:mb-[3px] [&_label>span]:mr-1 [&_label>span]:grid [&_svg]:size-[13px] [&_svg]:[grid-area:1/1]">
      <label class="border-l-transparent!"><i></i><span><input type="checkbox" checked><svg><use href="#tick"/></svg></span>(すべて選択)</label>
      <label><i></i><span><input type="checkbox" checked><svg><use href="#tick"/></svg></span>18</label>
      <label><i></i><span><input type="checkbox" checked><svg><use href="#tick"/></svg></span>19</label>
      <label><i></i><span><input type="checkbox" checked><svg><use href="#tick"/></svg></span>20</label>
      <label><i></i><span><input type="checkbox" checked><svg><use href="#tick"/></svg></span>21</label>
      <label><i></i><span><input type="checkbox" checked><svg><use href="#tick"/></svg></span>22</label>
      <label><i></i><span><input type="checkbox" checked><svg><use href="#tick"/></svg></span>23</label>
      <label><i></i><span><input type="checkbox" checked><svg><use href="#tick"/></svg></span>24</label>
      <label><i></i><span><input type="checkbox" checked><svg><use href="#tick"/></svg></span>25</label>
      <label><i></i><span><input type="checkbox" checked><svg><use href="#tick"/></svg></span>26</label>
    </div>
    <div class="w-[21px] bg-[#f0f0f0] pl-[7px] pt-[21px]"><div class="h-[35px] w-[6px] bg-[#858585]"></div></div>
  </div>
  <div class="flex justify-end gap-[14px] border-b border-[#dfe1e6] pb-[5px] pr-[8px] pt-[26px] text-sm text-black [&_button]:h-[29px] [&_button]:w-[86px] [&_button]:rounded [&_button]:border [&_button]:border-[#d0d0d0]">
    <button>OK</button><button>キャンセル</button>
  </div>
</div>

<!-- Number filter submenu -->
<div role="menu" class="absolute left-[509px] top-[654px] w-[239px] rounded border border-[#c6c6c6] bg-white text-[#5c5c5c] shadow-md [font-feature-settings:'palt'] [&_button]:block [&_button]:h-[30px] [&_button]:w-full [&_button]:pl-[39px] [&_button]:text-left [&_hr]:my-px [&_hr]:ml-10 [&_hr]:border-[#dedede]">
  <button role="menuitem">指定の値に等しい(<u>E</u>)...</button>
  <button role="menuitem">指定の値に等しくない(<u>N</u>)...</button>
  <hr>
  <button role="menuitem">指定の値より大きい(<u>G</u>)...</button>
  <button role="menuitem">指定の値以上(<u>O</u>)...</button>
  <button role="menuitem">指定の値より小さい(<u>L</u>)...</button>
  <button role="menuitem">指定の値以下(<u>Q</u>)...</button>
  <button role="menuitem" class="bg-[#c5c5c5] text-[#262626]">指定の範囲内(<u>W</u>)...</button>
  <hr>
  <button role="menuitem">トップテン(<u>T</u>)...</button>
  <button role="menuitem">平均より上(<u>A</u>)</button>
  <button role="menuitem">平均より下(<u>O</u>)</button>
  <hr>
  <button role="menuitem" class="text-sm">ユーザー設定フィルター(<u>F</u>)...</button>
</div>
</body>
</html>
